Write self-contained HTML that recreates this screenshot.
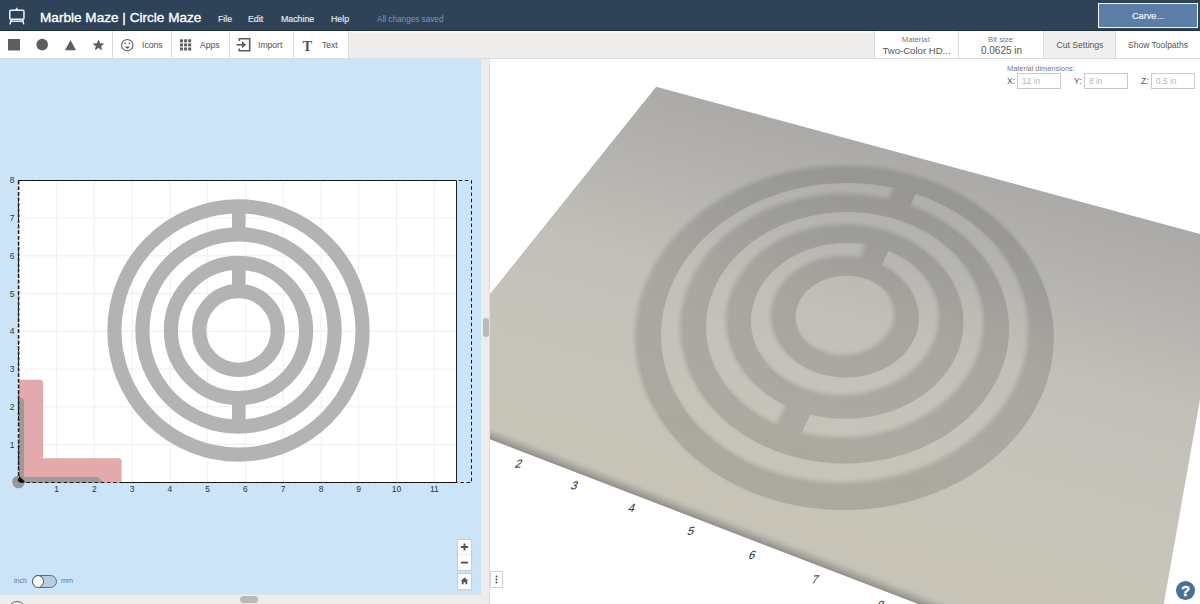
<!DOCTYPE html>
<html><head><meta charset="utf-8"><style>
*{box-sizing:border-box;margin:0;padding:0}
html,body{width:1200px;height:604px;overflow:hidden;background:#fff;font-family:"Liberation Sans",sans-serif}
.a{position:absolute}
#hdr{left:0;top:0;width:1200px;height:31px;background:#2e4358;border-bottom:1px solid #1e2e3d}
#hdr .t{color:#fff;font-size:13.6px;line-height:14px;top:10.5px;-webkit-text-stroke:0.35px #fff;left:40px;white-space:nowrap}
#hdr .m{color:#e8edf2;font-size:8.8px;line-height:9px;top:14.5px;-webkit-text-stroke:0.15px #e8edf2;white-space:nowrap}
#hdr .s{color:#8798ab;font-size:8.2px;line-height:9px;top:15px;left:377px;white-space:nowrap}
#carve{left:1098px;top:3px;width:100px;height:25px;background:#5a7ea6;border:1.6px solid #f4f6f8;color:#eef3f8;font-size:9.2px;text-align:center;line-height:10px;padding-top:7.2px;-webkit-text-stroke:0.2px #eef3f8}
#tb{left:0;top:31px;width:1200px;height:28px;background:#eeedeb;border-bottom:1px solid #d9dcde;box-shadow:inset 0 1.5px 0 #fafafa}
.tbw{top:0;height:27px;background:#fff;border-right:1px solid #dcdcdc}
.tl{color:#666;font-size:8.6px;line-height:9px;top:10px;white-space:nowrap;-webkit-text-stroke:0.1px #666}
.ic{fill:#5e5e5e}
#left{left:0;top:59px;width:481px;height:535px;background:#cce4f8;overflow:hidden}
#vs{left:481px;top:59px;width:9px;height:545px;background:#ececec;border-right:1px solid #dedede}
#hs{left:0;top:594px;width:481px;height:10px;background:#eaecee;border-top:1px solid #dfe3e6}
#view{left:490px;top:59px;width:710px;height:545px;background:#fff;overflow:hidden}
.zb{background:#fff;width:13px;height:15px;box-shadow:0 0 1px 1px rgba(0,0,0,0.08);color:#666;text-align:center}
.inp{height:16px;width:44px;border:1px solid #c9c9c9;background:#fff;color:#b5b5b5;font-size:8.3px;line-height:14px;padding-left:4px;top:14px}
.dl{font-size:8.5px;line-height:9px;color:#555;top:18px}
</style></head><body>
<div id="hdr" class="a">
 <svg class="a" style="left:7px;top:7px" width="20" height="20" viewBox="0 0 20 20" fill="none" stroke="#eef2f6" stroke-width="1.5">
  <rect x="2.75" y="3.35" width="14.2" height="8.9" rx="1"/>
  <path d="M8.7,2.7 L10.8,2.7 L9.75,0.8 Z" fill="#eef2f6" stroke-width="0.8"/>
  <line x1="3.6" y1="14.2" x2="16.2" y2="14.2"/>
  <line x1="4.2" y1="12.6" x2="3" y2="17.4"/><line x1="15.6" y1="12.6" x2="16.8" y2="17.4"/>
 </svg>
 <div class="a t">Marble Maze | Circle Maze</div>
 <div class="a m" style="left:218px">File</div>
 <div class="a m" style="left:248px">Edit</div>
 <div class="a m" style="left:281px">Machine</div>
 <div class="a m" style="left:331px">Help</div>
 <div class="a s">All changes saved</div>
 <div id="carve" class="a">Carve...</div>
</div>
<div id="tb" class="a">
 <div class="a tbw" style="left:0;width:113px"></div>
 <div class="a tbw" style="left:113px;width:59px"></div>
 <div class="a tbw" style="left:172px;width:58px"></div>
 <div class="a tbw" style="left:230px;width:64px"></div>
 <div class="a tbw" style="left:294px;width:55px"></div>
 <svg class="a" style="left:0;top:0" width="350" height="27">
  <rect class="ic" x="8" y="8" width="12" height="11.5"/>
  <circle class="ic" cx="42.2" cy="13.6" r="5.8"/>
  <polygon class="ic" points="65,19.2 76,19.2 70.5,9"/>
  <polygon class="ic" points="98.5,8.6 100.2,12.3 104.3,12.6 101.2,15.3 102.2,19.2 98.5,17 94.8,19.2 95.8,15.3 92.7,12.6 96.8,12.3"/>
  <g fill="none" stroke="#5e5e5e" stroke-width="1.1"><circle cx="127.3" cy="14.2" r="5.7"/></g>
  <circle class="ic" cx="125.2" cy="12.4" r="0.85"/><circle class="ic" cx="129.4" cy="12.4" r="0.85"/>
  <path class="ic" d="M125,15.6 Q127.3,15.2 129.6,15.6 Q129,17.7 127.3,17.7 Q125.6,17.7 125,15.6 Z"/>
  <g class="ic"><rect x="180" y="8.3" width="3" height="3"/><rect x="184.1" y="8.3" width="3" height="3"/><rect x="188.2" y="8.3" width="3" height="3"/>
  <rect x="180" y="12.4" width="3" height="3"/><rect x="184.1" y="12.4" width="3" height="3"/><rect x="188.2" y="12.4" width="3" height="3"/>
  <rect x="180" y="16.5" width="3" height="3"/><rect x="184.1" y="16.5" width="3" height="3"/><rect x="188.2" y="16.5" width="3" height="3"/></g>
  <g fill="none" stroke="#5e5e5e" stroke-width="1.6"><path d="M239.3,10 V7.8 H249.7 V19.8 H239.3 V17.6"/><path d="M236.5,13.8 H243"/></g><polygon class="ic" points="242,10.3 246.2,13.8 242,17.3"/>
  <text x="302.5" y="19.5" font-family="'Liberation Serif', serif" font-size="14.5" font-weight="bold" fill="#555">T</text>
 </svg>
 <div class="a tl" style="left:142px">Icons</div>
 <div class="a tl" style="left:200px">Apps</div>
 <div class="a tl" style="left:258px">Import</div>
 <div class="a tl" style="left:322px">Text</div>
 <div class="a tbw" style="left:874px;width:85px;border-left:1px solid #dcdcdc"></div>
 <div class="a tbw" style="left:959px;width:85px"></div>
 <div class="a tbw" style="left:1044px;width:72px;background:#efefef"></div>
 <div class="a tbw" style="left:1116px;width:84px;border-right:none"></div>
 <div class="a" style="left:874px;top:5px;width:85px;text-align:center;font-size:7.7px;line-height:8px;color:#777">Material:</div>
 <div class="a" style="left:874px;top:15px;width:85px;text-align:center;font-size:9.6px;line-height:10px;color:#555;white-space:nowrap">Two-Color HD...</div>
 <div class="a" style="left:959px;top:5px;width:85px;text-align:center;font-size:7.7px;line-height:8px;color:#777">Bit size:</div>
 <div class="a" style="left:959px;top:15px;width:85px;text-align:center;font-size:10px;line-height:10px;color:#555">0.0625 in</div>
 <div class="a" style="left:1044px;top:10px;width:72px;text-align:center;font-size:8.6px;line-height:9px;color:#555">Cut Settings</div>
 <div class="a" style="left:1116px;top:10px;width:84px;text-align:center;font-size:8.5px;line-height:9px;color:#555">Show Toolpaths</div>
</div>
<div id="left" class="a">
<svg width="481" height="535" viewBox="0 59 481 535" style="position:absolute;left:0;top:0">
<rect x="18.5" y="180.5" width="438" height="302" fill="#fff"/><path d="M18.5,180.5 H456.5 V482.5 H18.5" fill="none" stroke="#1e1e1e" stroke-width="1"/>
<g stroke="#eceff0" stroke-width="1"><line x1="56.6" y1="181" x2="56.6" y2="482" />
<line x1="94.3" y1="181" x2="94.3" y2="482" />
<line x1="132.1" y1="181" x2="132.1" y2="482" />
<line x1="169.9" y1="181" x2="169.9" y2="482" />
<line x1="207.7" y1="181" x2="207.7" y2="482" />
<line x1="245.4" y1="181" x2="245.4" y2="482" />
<line x1="283.2" y1="181" x2="283.2" y2="482" />
<line x1="321.0" y1="181" x2="321.0" y2="482" />
<line x1="358.7" y1="181" x2="358.7" y2="482" />
<line x1="396.5" y1="181" x2="396.5" y2="482" />
<line x1="434.3" y1="181" x2="434.3" y2="482" />
<line x1="19" y1="444.6" x2="456" y2="444.6" />
<line x1="19" y1="406.9" x2="456" y2="406.9" />
<line x1="19" y1="369.1" x2="456" y2="369.1" />
<line x1="19" y1="331.3" x2="456" y2="331.3" />
<line x1="19" y1="293.5" x2="456" y2="293.5" />
<line x1="19" y1="255.8" x2="456" y2="255.8" />
<line x1="19" y1="218.0" x2="456" y2="218.0" /></g>
<g fill="none" stroke="#b3b3b3" stroke-width="14.2"><circle cx="238.5" cy="330.5" r="124.1" /><circle cx="238.5" cy="330.5" r="96.1" /><circle cx="238.5" cy="330.5" r="67.6" /><circle cx="238.5" cy="330.5" r="39.3" /></g>
<g fill="#b3b3b3">
<rect x="232" y="212" width="13.5" height="17"/>
<rect x="232" y="268" width="13.5" height="18"/>
<rect x="232" y="403" width="13.5" height="18"/>
</g>
<path d="M19,379.7 L40,379.7 Q43,379.7 43,382.7 L43,458.2 L118.6,458.2 Q121.6,458.2 121.6,461.2 L121.6,483 L19,483 Z" fill="#e3a9ab"/>
<path d="M19,398 L22,398 Q24,399 24,401 L24,477 L98,477 L103,482 L103,483 L19,483 Z" fill="#9b9b9b"/>
<circle cx="18.5" cy="482" r="6.3" fill="#8f8f8f" opacity="0.9"/>
<path d="M19,476 L25,482 L19,482 Z" fill="#000"/>
<rect x="18.5" y="180.5" width="453" height="302" fill="none" stroke="#111" stroke-width="1" stroke-dasharray="3.5 2.7"/>
<line x1="18.6" y1="181" x2="18.6" y2="482" stroke="#222" stroke-width="1.6" stroke-dasharray="3.5 2"/>
<g font-family="'Liberation Sans', sans-serif" font-size="8.5" fill="#333"><text x="56.6" y="492" text-anchor="middle">1</text>
<text x="94.3" y="492" text-anchor="middle">2</text>
<text x="132.1" y="492" text-anchor="middle">3</text>
<text x="169.9" y="492" text-anchor="middle">4</text>
<text x="207.7" y="492" text-anchor="middle">5</text>
<text x="245.4" y="492" text-anchor="middle">6</text>
<text x="283.2" y="492" text-anchor="middle">7</text>
<text x="321.0" y="492" text-anchor="middle">8</text>
<text x="358.7" y="492" text-anchor="middle">9</text>
<text x="396.5" y="492" text-anchor="middle">10</text>
<text x="434.3" y="492" text-anchor="middle">11</text>
<text x="12" y="447.6" text-anchor="middle">1</text>
<text x="12" y="409.9" text-anchor="middle">2</text>
<text x="12" y="372.1" text-anchor="middle">3</text>
<text x="12" y="334.3" text-anchor="middle">4</text>
<text x="12" y="296.5" text-anchor="middle">5</text>
<text x="12" y="258.8" text-anchor="middle">6</text>
<text x="12" y="221.0" text-anchor="middle">7</text>
<text x="12" y="183.2" text-anchor="middle">8</text></g>
</svg>
 <div class="a" style="left:14px;top:518px;font-size:7.1px;line-height:8px;color:#66778a">inch</div>
 <div class="a" style="left:32px;top:516px;width:25px;height:13px;border-radius:7px;background:#b9cde0;border:1px solid #5d6e80"></div>
 <div class="a" style="left:32px;top:516px;width:12px;height:13px;border-radius:50%;background:#fff;border:1.2px solid #4f5f70"></div>
 <div class="a" style="left:61px;top:518px;font-size:7.2px;line-height:8px;color:#66778a">mm</div>
 <div class="a zb" style="left:458px;top:481px;"><svg width="13" height="15" viewBox="0 0 13 15"><path d="M2.9,7 H10.1 M6.5,3.4 V10.6" stroke="#555" stroke-width="1.9"/></svg></div>
 <div class="a zb" style="left:458px;top:496px;"><svg width="13" height="15" viewBox="0 0 13 15"><path d="M2.9,7.6 H10.1" stroke="#555" stroke-width="1.9"/></svg></div>
 <div class="a zb" style="left:458px;top:515px;">
  <svg width="13" height="15" viewBox="0 0 13 15"><path d="M6.5,3.4 L10.2,6.9 H9.2 V10.2 H7.4 V8.2 H5.6 V10.2 H3.8 V6.9 H2.8 Z" fill="#555"/></svg>
 </div>
</div>
<div id="vs" class="a"><div class="a" style="left:2px;top:259px;width:6px;height:19px;border-radius:3px;background:#b9b9b9"></div></div>
<div id="hs" class="a">
 <div class="a" style="left:240px;top:1px;width:18px;height:7px;border-radius:4px;background:#b9b9b9"></div>
 <div class="a" style="left:8px;top:6px;width:18px;height:18px;border-radius:50%;border:1.5px solid #5d6e80"></div>
</div>
<div id="view" class="a">
<svg width="710" height="545" viewBox="0 0 710 545" style="position:absolute;left:0;top:0">
<defs>
<linearGradient id="sg" gradientUnits="userSpaceOnUse" x1="166" y1="27.5" x2="61" y2="413.5">
<stop offset="0" stop-color="#abaaa8"/><stop offset="0.175" stop-color="#b3b2ae"/><stop offset="0.425" stop-color="#c2bfb8"/><stop offset="0.6" stop-color="#c5c2ba"/><stop offset="0.925" stop-color="#c7c4b7"/>
</linearGradient>
<linearGradient id="fg" gradientUnits="userSpaceOnUse" x1="-82.3" y1="337.5" x2="-86.5" y2="348.4">
<stop offset="0" stop-color="#c2c0b7"/><stop offset="0.25" stop-color="#b6b4ab"/><stop offset="0.7" stop-color="#9b9991"/><stop offset="1" stop-color="#87857e"/>
</linearGradient>
<filter id="bw" x="-20%" y="-20%" width="140%" height="140%"><feGaussianBlur stdDeviation="2"/></filter>
<filter id="bf" x="-20%" y="-20%" width="140%" height="140%"><feGaussianBlur stdDeviation="0.55"/></filter>
</defs>
<polygon points="-82.3,335.5 660.4,618.4 660.4,634.3 -82.3,348.6" fill="url(#fg)"/>
<polygon points="-82.3,337.5 660.4,620.4 738.0,182.6 166.2,27.8" fill="url(#sg)"/>
<g opacity="0.13"><g filter="url(#bw)" fill="#000" transform="translate(-3,-3.5)"><path fill-rule="evenodd" d="M557.7,320.3 L559.2,314.8 L560.6,309.4 L561.6,303.9 L562.5,298.5 L563.1,293.0 L563.6,287.6 L563.8,282.2 L563.8,276.8 L563.6,271.4 L563.2,266.0 L562.6,260.7 L561.8,255.5 L560.8,250.3 L559.6,245.1 L558.3,240.0 L556.7,234.9 L555.0,230.0 L553.1,225.0 L551.0,220.2 L548.7,215.4 L546.3,210.7 L543.7,206.1 L541.0,201.6 L538.1,197.2 L535.1,192.8 L531.9,188.5 L528.6,184.4 L525.2,180.3 L521.6,176.3 L517.9,172.5 L514.0,168.7 L510.1,165.1 L506.0,161.5 L501.9,158.1 L497.6,154.7 L493.2,151.5 L488.7,148.4 L484.2,145.4 L479.5,142.5 L474.8,139.7 L470.0,137.1 L465.1,134.6 L460.1,132.2 L455.0,129.9 L449.9,127.7 L444.7,125.6 L439.5,123.7 L434.2,121.9 L428.9,120.2 L423.5,118.7 L418.1,117.3 L412.6,115.9 L407.1,114.8 L401.6,113.7 L396.0,112.8 L390.4,112.0 L384.8,111.3 L379.1,110.7 L373.5,110.3 L367.8,110.0 L362.2,109.9 L356.5,109.8 L350.8,109.9 L345.1,110.1 L339.5,110.4 L333.8,110.9 L328.2,111.5 L322.5,112.2 L316.9,113.0 L311.4,114.0 L305.8,115.1 L300.3,116.3 L294.8,117.7 L289.3,119.2 L283.9,120.7 L278.6,122.5 L273.3,124.3 L268.0,126.3 L262.8,128.4 L257.7,130.6 L252.6,132.9 L247.6,135.4 L242.7,137.9 L237.8,140.6 L233.0,143.4 L228.3,146.4 L223.7,149.4 L219.2,152.6 L214.8,155.8 L210.5,159.2 L206.3,162.7 L202.2,166.3 L198.2,170.0 L194.3,173.8 L190.6,177.7 L187.0,181.7 L183.5,185.8 L180.2,190.0 L176.9,194.3 L173.9,198.7 L171.0,203.2 L168.2,207.8 L165.6,212.4 L163.1,217.2 L160.9,222.0 L158.7,226.9 L156.8,231.8 L155.0,236.9 L153.4,241.9 L152.0,247.1 L150.8,252.3 L149.8,257.5 L149.0,262.8 L148.4,268.2 L148.0,273.5 L147.7,278.9 L147.7,284.4 L148.0,289.8 L148.4,295.3 L149.0,300.7 L149.9,306.2 L151.0,311.7 L152.3,317.1 L153.8,322.6 L155.5,328.0 L157.5,333.4 L159.7,338.8 L162.1,344.1 L164.8,349.4 L167.7,354.6 L170.8,359.7 L174.1,364.8 L177.7,369.8 L181.5,374.7 L185.5,379.5 L189.7,384.3 L194.1,388.9 L198.7,393.4 L203.6,397.7 L208.6,402.0 L213.9,406.1 L219.3,410.1 L224.9,413.9 L230.7,417.6 L236.6,421.1 L242.8,424.4 L249.0,427.6 L255.5,430.6 L262.0,433.4 L268.7,436.0 L275.6,438.4 L282.5,440.6 L289.6,442.6 L296.7,444.4 L303.9,446.0 L311.2,447.4 L318.6,448.6 L326.0,449.5 L333.5,450.3 L341.0,450.8 L348.5,451.0 L356.0,451.1 L363.6,450.9 L371.1,450.5 L378.6,449.9 L386.0,449.1 L393.4,448.1 L400.8,446.8 L408.1,445.3 L415.3,443.6 L422.4,441.7 L429.4,439.6 L436.4,437.3 L443.2,434.8 L449.9,432.1 L456.4,429.2 L462.8,426.1 L469.1,422.9 L475.2,419.5 L481.1,415.9 L486.9,412.1 L492.5,408.3 L497.9,404.2 L503.1,400.1 L508.1,395.8 L512.9,391.3 L517.5,386.8 L521.9,382.1 L526.1,377.4 L530.1,372.5 L533.9,367.6 L537.4,362.5 L540.7,357.4 L543.8,352.3 L546.7,347.1 L549.4,341.8 L551.8,336.5 L554.0,331.1 L556.0,325.7ZM533.0,317.7 L531.1,322.5 L529.1,327.2 L526.9,331.8 L524.5,336.5 L521.8,341.0 L519.0,345.6 L516.0,350.0 L512.8,354.4 L509.4,358.7 L505.9,362.9 L502.1,367.1 L498.2,371.1 L494.1,375.1 L489.8,378.9 L485.3,382.7 L480.7,386.3 L475.9,389.8 L470.9,393.1 L465.8,396.4 L460.6,399.5 L455.2,402.4 L449.7,405.2 L444.0,407.9 L438.3,410.3 L432.4,412.7 L426.4,414.8 L420.3,416.8 L414.2,418.6 L407.9,420.3 L401.6,421.7 L395.2,423.0 L388.8,424.1 L382.3,425.0 L375.8,425.7 L369.2,426.2 L362.6,426.6 L356.1,426.7 L349.5,426.7 L342.9,426.4 L336.3,426.0 L329.8,425.4 L323.3,424.5 L316.9,423.5 L310.5,422.4 L304.1,421.0 L297.9,419.4 L291.7,417.7 L285.6,415.8 L279.6,413.7 L273.7,411.4 L268.0,409.0 L262.3,406.5 L256.8,403.7 L251.4,400.8 L246.1,397.8 L241.0,394.6 L236.0,391.3 L231.2,387.9 L226.6,384.3 L222.1,380.6 L217.8,376.8 L213.6,372.9 L209.7,368.9 L205.9,364.8 L202.3,360.6 L198.9,356.3 L195.7,352.0 L192.7,347.5 L189.9,343.0 L187.3,338.5 L184.8,333.8 L182.6,329.2 L180.6,324.5 L178.7,319.7 L177.1,315.0 L175.7,310.2 L174.4,305.4 L173.4,300.6 L172.5,295.7 L171.9,290.9 L171.4,286.1 L171.1,281.2 L171.0,276.4 L171.1,271.6 L171.4,266.9 L171.9,262.1 L172.5,257.4 L173.3,252.7 L174.3,248.1 L175.5,243.5 L176.8,239.0 L178.3,234.5 L179.9,230.1 L181.8,225.7 L183.7,221.4 L185.8,217.1 L188.1,212.9 L190.5,208.8 L193.0,204.8 L195.7,200.8 L198.5,197.0 L201.5,193.2 L204.5,189.5 L207.7,185.8 L211.0,182.3 L214.4,178.9 L218.0,175.5 L221.6,172.3 L225.3,169.1 L229.2,166.0 L233.1,163.1 L237.1,160.2 L241.2,157.4 L245.4,154.8 L249.7,152.2 L254.0,149.8 L258.4,147.4 L262.9,145.2 L267.5,143.1 L272.1,141.1 L276.7,139.2 L281.5,137.4 L286.2,135.7 L291.1,134.1 L295.9,132.7 L300.8,131.3 L305.8,130.1 L310.8,129.0 L315.8,128.0 L320.8,127.1 L325.8,126.3 L330.9,125.6 L336.0,125.1 L341.1,124.7 L346.2,124.4 L351.3,124.2 L356.5,124.1 L361.6,124.1 L366.7,124.3 L371.8,124.6 L376.9,125.0 L382.0,125.5 L387.1,126.1 L392.1,126.8 L397.1,127.7 L402.1,128.6 L407.1,129.7 L412.0,130.9 L416.9,132.2 L421.7,133.6 L426.6,135.2 L431.3,136.8 L436.0,138.6 L440.7,140.4 L445.2,142.4 L449.8,144.5 L454.2,146.7 L458.6,149.0 L462.9,151.4 L467.2,153.9 L471.3,156.5 L475.4,159.3 L479.4,162.1 L483.3,165.0 L487.1,168.0 L490.8,171.2 L494.4,174.4 L497.9,177.7 L501.3,181.1 L504.6,184.6 L507.7,188.2 L510.7,191.8 L513.7,195.6 L516.4,199.4 L519.1,203.4 L521.6,207.4 L524.0,211.4 L526.2,215.6 L528.3,219.8 L530.2,224.1 L532.0,228.4 L533.6,232.8 L535.1,237.3 L536.4,241.8 L537.6,246.3 L538.5,250.9 L539.3,255.6 L539.9,260.3 L540.4,265.0 L540.7,269.7 L540.7,274.5 L540.6,279.3 L540.3,284.1 L539.9,288.9 L539.2,293.7 L538.3,298.6 L537.3,303.4 L536.0,308.2 L534.6,313.0ZM513.0,306.1 L514.4,301.9 L515.5,297.7 L516.5,293.5 L517.4,289.3 L518.0,285.1 L518.5,280.8 L518.8,276.6 L519.0,272.4 L519.0,268.2 L518.9,264.0 L518.5,259.8 L518.1,255.7 L517.4,251.6 L516.6,247.5 L515.7,243.5 L514.6,239.5 L513.4,235.5 L512.0,231.6 L510.5,227.7 L508.8,223.9 L507.1,220.2 L505.1,216.5 L503.1,212.9 L500.9,209.3 L498.6,205.8 L496.2,202.4 L493.7,199.0 L491.0,195.7 L488.2,192.5 L485.4,189.4 L482.4,186.3 L479.3,183.3 L476.2,180.5 L472.9,177.6 L469.5,174.9 L466.1,172.3 L462.6,169.8 L459.0,167.3 L455.3,164.9 L451.5,162.7 L447.7,160.5 L443.8,158.4 L439.8,156.4 L435.8,154.6 L431.7,152.8 L427.6,151.1 L423.4,149.5 L419.1,148.0 L414.8,146.6 L410.5,145.3 L406.1,144.1 L401.7,143.1 L397.3,142.1 L392.8,141.2 L388.3,140.4 L383.8,139.8 L379.3,139.2 L374.7,138.8 L370.2,138.4 L365.6,138.2 L361.0,138.0 L356.4,138.0 L351.9,138.1 L347.3,138.2 L342.7,138.5 L338.1,138.9 L333.6,139.4 L329.0,140.0 L324.5,140.7 L320.0,141.5 L315.5,142.4 L311.1,143.4 L306.7,144.5 L302.3,145.7 L298.0,147.1 L293.7,148.5 L289.4,150.0 L285.2,151.6 L281.0,153.3 L276.9,155.2 L272.9,157.1 L268.9,159.1 L265.0,161.2 L261.1,163.4 L257.3,165.7 L253.6,168.1 L250.0,170.6 L246.4,173.2 L243.0,175.9 L239.6,178.6 L236.3,181.5 L233.1,184.4 L230.0,187.4 L227.0,190.5 L224.1,193.6 L221.3,196.9 L218.7,200.2 L216.1,203.6 L213.7,207.1 L211.3,210.6 L209.1,214.2 L207.1,217.9 L205.1,221.6 L203.3,225.4 L201.6,229.2 L200.1,233.1 L198.7,237.0 L197.4,241.0 L196.3,245.0 L195.4,249.1 L194.6,253.2 L193.9,257.3 L193.4,261.5 L193.1,265.7 L192.9,269.9 L192.9,274.1 L193.1,278.3 L193.4,282.5 L193.9,286.8 L194.6,291.0 L195.4,295.3 L196.4,299.5 L197.5,303.7 L198.9,307.9 L200.4,312.0 L202.1,316.2 L203.9,320.3 L206.0,324.3 L208.2,328.3 L210.5,332.3 L213.0,336.2 L215.7,340.1 L218.6,343.8 L221.6,347.5 L224.8,351.2 L228.2,354.7 L231.7,358.2 L235.3,361.6 L239.1,364.9 L243.1,368.0 L247.2,371.1 L251.4,374.1 L255.8,376.9 L260.3,379.6 L264.9,382.3 L269.6,384.7 L274.4,387.1 L279.4,389.3 L284.4,391.4 L289.6,393.3 L294.8,395.1 L300.1,396.7 L305.5,398.2 L310.9,399.5 L316.5,400.7 L322.0,401.7 L327.6,402.6 L333.3,403.3 L339.0,403.8 L344.7,404.2 L350.4,404.4 L356.1,404.4 L361.8,404.3 L367.5,404.0 L373.2,403.6 L378.9,403.0 L384.5,402.2 L390.1,401.3 L395.7,400.2 L401.2,398.9 L406.6,397.5 L412.0,396.0 L417.3,394.3 L422.5,392.4 L427.7,390.4 L432.7,388.3 L437.6,386.0 L442.5,383.6 L447.2,381.1 L451.8,378.4 L456.3,375.7 L460.6,372.8 L464.8,369.7 L468.9,366.6 L472.8,363.4 L476.6,360.1 L480.3,356.7 L483.8,353.2 L487.1,349.6 L490.3,345.9 L493.3,342.2 L496.2,338.4 L498.9,334.5 L501.4,330.6 L503.7,326.6 L505.9,322.6 L508.0,318.5 L509.8,314.4 L511.5,310.3ZM489.0,302.5 L487.5,306.0 L485.9,309.5 L484.1,313.0 L482.2,316.4 L480.1,319.7 L477.9,323.1 L475.5,326.3 L473.1,329.5 L470.4,332.7 L467.7,335.8 L464.8,338.8 L461.8,341.7 L458.6,344.6 L455.4,347.4 L452.0,350.1 L448.5,352.7 L444.9,355.2 L441.1,357.6 L437.3,360.0 L433.4,362.2 L429.4,364.3 L425.3,366.3 L421.1,368.2 L416.8,370.0 L412.4,371.7 L408.0,373.2 L403.5,374.6 L398.9,375.9 L394.3,377.1 L389.6,378.1 L384.9,379.0 L380.2,379.8 L375.4,380.4 L370.6,380.9 L365.8,381.3 L361.0,381.5 L356.1,381.6 L351.3,381.6 L346.4,381.4 L341.6,381.1 L336.8,380.7 L332.0,380.1 L327.3,379.4 L322.6,378.5 L317.9,377.6 L313.3,376.5 L308.7,375.2 L304.2,373.9 L299.8,372.4 L295.4,370.8 L291.1,369.0 L286.9,367.2 L282.8,365.2 L278.8,363.1 L274.8,361.0 L271.0,358.7 L267.3,356.3 L263.6,353.8 L260.1,351.2 L256.7,348.6 L253.5,345.8 L250.3,343.0 L247.3,340.1 L244.4,337.1 L241.6,334.0 L239.0,330.9 L236.5,327.7 L234.2,324.5 L232.0,321.1 L229.9,317.8 L227.9,314.4 L226.2,311.0 L224.5,307.5 L223.0,304.0 L221.7,300.4 L220.4,296.9 L219.4,293.3 L218.5,289.7 L217.7,286.1 L217.1,282.5 L216.6,278.8 L216.2,275.2 L216.0,271.6 L216.0,268.0 L216.0,264.4 L216.3,260.8 L216.6,257.2 L217.1,253.6 L217.7,250.1 L218.5,246.6 L219.4,243.1 L220.4,239.7 L221.5,236.3 L222.8,232.9 L224.2,229.6 L225.7,226.3 L227.3,223.1 L229.0,219.9 L230.9,216.8 L232.8,213.7 L234.9,210.7 L237.1,207.7 L239.3,204.8 L241.7,202.0 L244.2,199.2 L246.7,196.5 L249.4,193.9 L252.1,191.3 L254.9,188.9 L257.8,186.4 L260.8,184.1 L263.9,181.8 L267.0,179.7 L270.2,177.6 L273.5,175.5 L276.8,173.6 L280.2,171.7 L283.7,169.9 L287.2,168.3 L290.7,166.6 L294.3,165.1 L298.0,163.7 L301.7,162.4 L305.4,161.1 L309.2,159.9 L313.0,158.9 L316.9,157.9 L320.8,157.0 L324.7,156.2 L328.6,155.5 L332.5,154.8 L336.5,154.3 L340.4,153.9 L344.4,153.5 L348.4,153.3 L352.4,153.1 L356.4,153.1 L360.4,153.1 L364.4,153.2 L368.4,153.4 L372.4,153.8 L376.4,154.2 L380.3,154.7 L384.3,155.2 L388.2,155.9 L392.1,156.7 L395.9,157.6 L399.8,158.5 L403.6,159.6 L407.3,160.7 L411.1,161.9 L414.7,163.2 L418.4,164.6 L422.0,166.1 L425.5,167.7 L429.0,169.4 L432.5,171.1 L435.8,172.9 L439.2,174.8 L442.4,176.8 L445.6,178.9 L448.7,181.1 L451.7,183.3 L454.7,185.6 L457.6,188.0 L460.4,190.5 L463.1,193.0 L465.7,195.6 L468.3,198.3 L470.7,201.0 L473.1,203.8 L475.3,206.7 L477.5,209.6 L479.5,212.6 L481.5,215.6 L483.3,218.7 L485.0,221.9 L486.6,225.1 L488.1,228.4 L489.5,231.7 L490.7,235.0 L491.8,238.4 L492.8,241.8 L493.7,245.3 L494.4,248.7 L495.1,252.3 L495.5,255.8 L495.9,259.4 L496.1,262.9 L496.2,266.5 L496.1,270.1 L495.9,273.8 L495.5,277.4 L495.0,281.0 L494.4,284.6 L493.6,288.2 L492.7,291.8 L491.6,295.4 L490.4,299.0ZM468.2,291.9 L469.3,289.0 L470.2,286.0 L471.1,283.0 L471.8,280.0 L472.4,277.0 L472.8,274.0 L473.2,271.0 L473.4,267.9 L473.5,264.9 L473.5,261.9 L473.4,258.9 L473.2,255.9 L472.8,252.9 L472.4,250.0 L471.8,247.1 L471.1,244.1 L470.3,241.3 L469.5,238.4 L468.5,235.6 L467.4,232.8 L466.1,230.0 L464.8,227.3 L463.4,224.6 L461.9,222.0 L460.3,219.4 L458.7,216.9 L456.9,214.4 L455.0,212.0 L453.1,209.6 L451.0,207.2 L448.9,205.0 L446.7,202.7 L444.5,200.6 L442.1,198.5 L439.7,196.4 L437.2,194.4 L434.7,192.5 L432.0,190.7 L429.4,188.9 L426.6,187.2 L423.8,185.6 L421.0,184.0 L418.1,182.5 L415.1,181.1 L412.1,179.7 L409.1,178.4 L406.0,177.2 L402.9,176.1 L399.7,175.0 L396.5,174.1 L393.3,173.2 L390.0,172.3 L386.7,171.6 L383.4,170.9 L380.1,170.3 L376.7,169.8 L373.4,169.4 L370.0,169.1 L366.6,168.8 L363.2,168.6 L359.8,168.5 L356.4,168.5 L353.0,168.5 L349.6,168.7 L346.2,168.9 L342.8,169.2 L339.4,169.5 L336.1,170.0 L332.7,170.5 L329.4,171.1 L326.1,171.8 L322.8,172.6 L319.5,173.5 L316.3,174.4 L313.1,175.4 L309.9,176.5 L306.8,177.6 L303.7,178.9 L300.6,180.2 L297.6,181.6 L294.6,183.0 L291.7,184.5 L288.8,186.1 L286.0,187.8 L283.3,189.5 L280.6,191.3 L278.0,193.2 L275.4,195.1 L272.9,197.1 L270.5,199.2 L268.1,201.3 L265.8,203.5 L263.6,205.8 L261.5,208.1 L259.4,210.4 L257.5,212.8 L255.6,215.3 L253.8,217.8 L252.1,220.4 L250.5,223.0 L249.0,225.6 L247.6,228.3 L246.2,231.1 L245.0,233.8 L243.9,236.7 L242.9,239.5 L242.0,242.4 L241.2,245.3 L240.5,248.2 L239.9,251.1 L239.4,254.1 L239.1,257.1 L238.8,260.1 L238.7,263.1 L238.7,266.1 L238.8,269.1 L239.0,272.2 L239.4,275.2 L239.9,278.2 L240.4,281.2 L241.1,284.2 L242.0,287.2 L242.9,290.2 L244.0,293.2 L245.2,296.1 L246.5,299.0 L247.9,301.9 L249.4,304.7 L251.1,307.5 L252.9,310.3 L254.7,313.0 L256.7,315.7 L258.9,318.3 L261.1,320.9 L263.4,323.4 L265.8,325.8 L268.4,328.2 L271.0,330.6 L273.8,332.8 L276.6,335.0 L279.5,337.1 L282.6,339.1 L285.7,341.1 L288.9,343.0 L292.1,344.7 L295.5,346.4 L298.9,348.0 L302.4,349.5 L306.0,350.9 L309.6,352.2 L313.3,353.5 L317.0,354.6 L320.8,355.6 L324.6,356.5 L328.5,357.3 L332.3,358.0 L336.3,358.5 L340.2,359.0 L344.2,359.4 L348.2,359.6 L352.2,359.8 L356.1,359.8 L360.1,359.7 L364.1,359.5 L368.1,359.2 L372.1,358.8 L376.0,358.3 L379.9,357.7 L383.8,356.9 L387.7,356.1 L391.5,355.1 L395.3,354.1 L399.0,352.9 L402.7,351.7 L406.3,350.3 L409.8,348.9 L413.3,347.3 L416.8,345.7 L420.1,344.0 L423.4,342.2 L426.6,340.3 L429.7,338.3 L432.7,336.2 L435.6,334.1 L438.4,331.9 L441.2,329.6 L443.8,327.2 L446.4,324.8 L448.8,322.3 L451.1,319.8 L453.3,317.2 L455.5,314.6 L457.5,311.9 L459.3,309.1 L461.1,306.3 L462.8,303.5 L464.3,300.7 L465.7,297.8 L467.0,294.9ZM445.7,287.5 L444.6,289.8 L443.4,292.1 L442.1,294.4 L440.8,296.7 L439.3,298.9 L437.7,301.1 L436.1,303.2 L434.4,305.3 L432.5,307.4 L430.6,309.4 L428.7,311.4 L426.6,313.3 L424.4,315.2 L422.2,317.0 L419.9,318.7 L417.6,320.4 L415.1,322.1 L412.6,323.6 L410.0,325.1 L407.4,326.6 L404.7,327.9 L402.0,329.2 L399.2,330.4 L396.3,331.6 L393.4,332.6 L390.5,333.6 L387.5,334.5 L384.4,335.4 L381.4,336.1 L378.3,336.8 L375.2,337.4 L372.1,337.9 L368.9,338.3 L365.7,338.6 L362.6,338.8 L359.4,339.0 L356.2,339.0 L353.0,339.0 L349.8,338.9 L346.6,338.7 L343.4,338.4 L340.3,338.0 L337.2,337.6 L334.0,337.0 L331.0,336.4 L327.9,335.7 L324.9,334.9 L321.9,334.0 L318.9,333.1 L316.0,332.1 L313.2,330.9 L310.4,329.8 L307.6,328.5 L304.9,327.2 L302.3,325.8 L299.7,324.3 L297.2,322.7 L294.8,321.1 L292.4,319.5 L290.1,317.7 L287.9,315.9 L285.7,314.1 L283.6,312.2 L281.7,310.2 L279.8,308.2 L277.9,306.2 L276.2,304.1 L274.6,302.0 L273.0,299.8 L271.5,297.6 L270.2,295.3 L268.9,293.1 L267.7,290.8 L266.6,288.4 L265.6,286.1 L264.7,283.7 L263.9,281.3 L263.2,278.9 L262.6,276.5 L262.1,274.1 L261.7,271.6 L261.3,269.2 L261.1,266.7 L261.0,264.3 L260.9,261.8 L261.0,259.4 L261.1,257.0 L261.4,254.6 L261.7,252.1 L262.1,249.7 L262.7,247.4 L263.3,245.0 L264.0,242.7 L264.7,240.3 L265.6,238.0 L266.6,235.8 L267.6,233.5 L268.7,231.3 L269.9,229.1 L271.2,227.0 L272.6,224.9 L274.0,222.8 L275.5,220.8 L277.1,218.8 L278.7,216.9 L280.4,215.0 L282.2,213.1 L284.1,211.3 L286.0,209.6 L287.9,207.9 L290.0,206.2 L292.0,204.6 L294.2,203.0 L296.4,201.5 L298.6,200.1 L300.9,198.7 L303.2,197.4 L305.6,196.1 L308.1,194.9 L310.5,193.8 L313.0,192.7 L315.6,191.6 L318.1,190.7 L320.7,189.8 L323.4,188.9 L326.0,188.2 L328.7,187.5 L331.4,186.8 L334.1,186.2 L336.9,185.7 L339.6,185.3 L342.4,184.9 L345.2,184.6 L348.0,184.3 L350.8,184.2 L353.6,184.0 L356.4,184.0 L359.2,184.0 L362.0,184.1 L364.8,184.3 L367.6,184.5 L370.4,184.8 L373.1,185.1 L375.9,185.6 L378.6,186.1 L381.3,186.6 L384.0,187.2 L386.7,187.9 L389.4,188.7 L392.0,189.5 L394.6,190.4 L397.2,191.3 L399.7,192.3 L402.2,193.4 L404.6,194.5 L407.1,195.7 L409.4,196.9 L411.8,198.2 L414.0,199.6 L416.3,201.0 L418.5,202.5 L420.6,204.0 L422.7,205.6 L424.7,207.2 L426.6,208.9 L428.5,210.7 L430.4,212.5 L432.1,214.3 L433.8,216.2 L435.5,218.1 L437.0,220.1 L438.5,222.1 L440.0,224.1 L441.3,226.2 L442.6,228.3 L443.7,230.5 L444.9,232.7 L445.9,234.9 L446.8,237.2 L447.7,239.5 L448.5,241.8 L449.1,244.1 L449.7,246.4 L450.3,248.8 L450.7,251.2 L451.0,253.6 L451.2,256.0 L451.4,258.4 L451.4,260.9 L451.4,263.3 L451.2,265.8 L451.0,268.2 L450.7,270.7 L450.3,273.1 L449.7,275.5 L449.1,277.9 L448.4,280.4 L447.6,282.7 L446.7,285.1ZM425.0,278.3 L425.7,276.5 L426.4,274.6 L426.9,272.8 L427.4,271.0 L427.9,269.1 L428.2,267.3 L428.5,265.4 L428.7,263.6 L428.9,261.7 L428.9,259.8 L428.9,258.0 L428.9,256.1 L428.7,254.3 L428.5,252.4 L428.2,250.6 L427.9,248.8 L427.4,247.0 L426.9,245.2 L426.4,243.4 L425.8,241.7 L425.1,239.9 L424.3,238.2 L423.5,236.5 L422.6,234.9 L421.6,233.2 L420.6,231.6 L419.6,230.0 L418.5,228.5 L417.3,226.9 L416.0,225.4 L414.7,224.0 L413.4,222.5 L412.0,221.2 L410.6,219.8 L409.1,218.5 L407.5,217.2 L405.9,216.0 L404.3,214.8 L402.6,213.6 L400.9,212.5 L399.2,211.4 L397.4,210.4 L395.6,209.5 L393.7,208.5 L391.8,207.6 L389.9,206.8 L387.9,206.0 L385.9,205.3 L383.9,204.6 L381.9,204.0 L379.9,203.4 L377.8,202.8 L375.7,202.3 L373.6,201.9 L371.5,201.5 L369.3,201.2 L367.2,200.9 L365.0,200.7 L362.9,200.5 L360.7,200.4 L358.5,200.3 L356.4,200.3 L354.2,200.3 L352.0,200.4 L349.8,200.6 L347.7,200.8 L345.5,201.0 L343.4,201.3 L341.2,201.6 L339.1,202.1 L337.0,202.5 L334.9,203.0 L332.8,203.6 L330.8,204.2 L328.8,204.8 L326.7,205.5 L324.8,206.3 L322.8,207.1 L320.9,208.0 L319.0,208.9 L317.1,209.8 L315.3,210.8 L313.5,211.8 L311.7,212.9 L310.0,214.0 L308.3,215.2 L306.7,216.4 L305.1,217.7 L303.5,219.0 L302.0,220.3 L300.6,221.7 L299.2,223.1 L297.8,224.5 L296.5,226.0 L295.3,227.5 L294.1,229.0 L293.0,230.6 L291.9,232.2 L290.9,233.8 L289.9,235.5 L289.0,237.2 L288.2,238.9 L287.5,240.6 L286.8,242.3 L286.1,244.1 L285.6,245.9 L285.1,247.7 L284.6,249.5 L284.3,251.3 L284.0,253.2 L283.7,255.0 L283.6,256.9 L283.5,258.7 L283.5,260.6 L283.6,262.4 L283.7,264.3 L283.9,266.2 L284.2,268.0 L284.6,269.9 L285.0,271.7 L285.5,273.6 L286.1,275.4 L286.7,277.2 L287.4,279.0 L288.2,280.8 L289.1,282.5 L290.0,284.2 L291.0,286.0 L292.1,287.6 L293.2,289.3 L294.4,290.9 L295.7,292.5 L297.0,294.1 L298.4,295.6 L299.9,297.1 L301.4,298.6 L303.0,300.0 L304.6,301.4 L306.3,302.7 L308.1,304.0 L309.9,305.3 L311.7,306.5 L313.6,307.6 L315.6,308.7 L317.6,309.7 L319.6,310.7 L321.7,311.7 L323.8,312.6 L326.0,313.4 L328.2,314.1 L330.4,314.9 L332.6,315.5 L334.9,316.1 L337.2,316.6 L339.6,317.1 L341.9,317.5 L344.3,317.8 L346.6,318.1 L349.0,318.3 L351.4,318.5 L353.8,318.5 L356.2,318.6 L358.6,318.5 L361.0,318.4 L363.4,318.2 L365.8,318.0 L368.2,317.7 L370.5,317.3 L372.9,316.9 L375.2,316.4 L377.5,315.9 L379.8,315.2 L382.0,314.6 L384.2,313.8 L386.4,313.0 L388.6,312.2 L390.7,311.3 L392.8,310.3 L394.8,309.3 L396.8,308.2 L398.8,307.1 L400.7,306.0 L402.5,304.7 L404.3,303.5 L406.1,302.2 L407.8,300.8 L409.4,299.4 L411.0,298.0 L412.5,296.5 L414.0,295.0 L415.4,293.5 L416.7,291.9 L418.0,290.3 L419.2,288.6 L420.3,287.0 L421.4,285.3 L422.4,283.5 L423.3,281.8 L424.2,280.0ZM403.4,272.8 L402.7,274.0 L402.1,275.2 L401.4,276.4 L400.6,277.6 L399.8,278.7 L398.9,279.8 L398.1,280.9 L397.1,282.0 L396.1,283.1 L395.1,284.1 L394.0,285.1 L392.9,286.1 L391.8,287.1 L390.6,288.0 L389.4,288.9 L388.1,289.7 L386.9,290.6 L385.5,291.4 L384.2,292.1 L382.8,292.8 L381.4,293.5 L379.9,294.2 L378.5,294.8 L377.0,295.4 L375.5,295.9 L374.0,296.4 L372.4,296.8 L370.8,297.3 L369.3,297.6 L367.7,298.0 L366.1,298.3 L364.4,298.5 L362.8,298.7 L361.2,298.9 L359.5,299.0 L357.9,299.1 L356.2,299.1 L354.6,299.1 L352.9,299.0 L351.3,298.9 L349.7,298.8 L348.0,298.6 L346.4,298.4 L344.8,298.1 L343.2,297.8 L341.6,297.4 L340.1,297.0 L338.5,296.6 L337.0,296.1 L335.5,295.6 L334.0,295.0 L332.5,294.4 L331.1,293.8 L329.7,293.1 L328.3,292.4 L326.9,291.7 L325.6,290.9 L324.3,290.1 L323.1,289.2 L321.9,288.3 L320.7,287.4 L319.5,286.5 L318.4,285.5 L317.4,284.5 L316.3,283.5 L315.4,282.5 L314.4,281.4 L313.5,280.3 L312.7,279.2 L311.9,278.0 L311.1,276.9 L310.4,275.7 L309.7,274.5 L309.1,273.3 L308.6,272.1 L308.0,270.8 L307.6,269.6 L307.1,268.3 L306.8,267.1 L306.5,265.8 L306.2,264.5 L306.0,263.2 L305.8,261.9 L305.7,260.6 L305.6,259.3 L305.6,258.0 L305.6,256.8 L305.7,255.5 L305.8,254.2 L306.0,252.9 L306.2,251.6 L306.5,250.3 L306.8,249.1 L307.2,247.8 L307.6,246.6 L308.1,245.4 L308.6,244.2 L309.2,243.0 L309.8,241.8 L310.4,240.6 L311.1,239.5 L311.9,238.3 L312.6,237.2 L313.5,236.1 L314.3,235.1 L315.2,234.0 L316.1,233.0 L317.1,232.0 L318.1,231.0 L319.2,230.1 L320.2,229.2 L321.4,228.3 L322.5,227.4 L323.7,226.6 L324.9,225.8 L326.1,225.0 L327.4,224.3 L328.6,223.6 L330.0,222.9 L331.3,222.2 L332.6,221.6 L334.0,221.1 L335.4,220.5 L336.8,220.0 L338.3,219.5 L339.7,219.1 L341.2,218.7 L342.7,218.3 L344.2,218.0 L345.7,217.7 L347.2,217.5 L348.7,217.3 L350.2,217.1 L351.7,216.9 L353.3,216.8 L354.8,216.8 L356.3,216.7 L357.9,216.8 L359.4,216.8 L360.9,216.9 L362.5,217.0 L364.0,217.2 L365.5,217.4 L367.0,217.6 L368.5,217.9 L370.0,218.2 L371.5,218.6 L372.9,218.9 L374.4,219.4 L375.8,219.8 L377.2,220.3 L378.6,220.8 L380.0,221.4 L381.4,222.0 L382.7,222.6 L384.0,223.3 L385.3,224.0 L386.5,224.7 L387.8,225.5 L389.0,226.3 L390.1,227.1 L391.3,227.9 L392.4,228.8 L393.4,229.7 L394.5,230.7 L395.5,231.6 L396.5,232.6 L397.4,233.6 L398.3,234.7 L399.1,235.7 L399.9,236.8 L400.7,237.9 L401.4,239.0 L402.1,240.2 L402.8,241.3 L403.4,242.5 L403.9,243.7 L404.4,244.9 L404.9,246.1 L405.3,247.4 L405.7,248.6 L406.0,249.9 L406.3,251.1 L406.5,252.4 L406.7,253.7 L406.8,255.0 L406.9,256.2 L406.9,257.5 L406.9,258.8 L406.8,260.1 L406.7,261.4 L406.5,262.7 L406.3,264.0 L406.0,265.3 L405.7,266.6 L405.3,267.8 L404.9,269.1 L404.5,270.3 L403.9,271.6Z"/><path d="M409.8,125.9 L427.8,130.9 L418.2,151.0 L399.9,145.8ZM381.9,182.0 L400.7,187.6 L390.0,209.9 L370.9,204.2ZM287.3,372.3 L308.8,379.9 L322.1,352.0 L300.9,344.7Z"/></g><g filter="url(#bf)" fill="#000"><path fill-rule="evenodd" d="M557.7,320.3 L559.2,314.8 L560.6,309.4 L561.6,303.9 L562.5,298.5 L563.1,293.0 L563.6,287.6 L563.8,282.2 L563.8,276.8 L563.6,271.4 L563.2,266.0 L562.6,260.7 L561.8,255.5 L560.8,250.3 L559.6,245.1 L558.3,240.0 L556.7,234.9 L555.0,230.0 L553.1,225.0 L551.0,220.2 L548.7,215.4 L546.3,210.7 L543.7,206.1 L541.0,201.6 L538.1,197.2 L535.1,192.8 L531.9,188.5 L528.6,184.4 L525.2,180.3 L521.6,176.3 L517.9,172.5 L514.0,168.7 L510.1,165.1 L506.0,161.5 L501.9,158.1 L497.6,154.7 L493.2,151.5 L488.7,148.4 L484.2,145.4 L479.5,142.5 L474.8,139.7 L470.0,137.1 L465.1,134.6 L460.1,132.2 L455.0,129.9 L449.9,127.7 L444.7,125.6 L439.5,123.7 L434.2,121.9 L428.9,120.2 L423.5,118.7 L418.1,117.3 L412.6,115.9 L407.1,114.8 L401.6,113.7 L396.0,112.8 L390.4,112.0 L384.8,111.3 L379.1,110.7 L373.5,110.3 L367.8,110.0 L362.2,109.9 L356.5,109.8 L350.8,109.9 L345.1,110.1 L339.5,110.4 L333.8,110.9 L328.2,111.5 L322.5,112.2 L316.9,113.0 L311.4,114.0 L305.8,115.1 L300.3,116.3 L294.8,117.7 L289.3,119.2 L283.9,120.7 L278.6,122.5 L273.3,124.3 L268.0,126.3 L262.8,128.4 L257.7,130.6 L252.6,132.9 L247.6,135.4 L242.7,137.9 L237.8,140.6 L233.0,143.4 L228.3,146.4 L223.7,149.4 L219.2,152.6 L214.8,155.8 L210.5,159.2 L206.3,162.7 L202.2,166.3 L198.2,170.0 L194.3,173.8 L190.6,177.7 L187.0,181.7 L183.5,185.8 L180.2,190.0 L176.9,194.3 L173.9,198.7 L171.0,203.2 L168.2,207.8 L165.6,212.4 L163.1,217.2 L160.9,222.0 L158.7,226.9 L156.8,231.8 L155.0,236.9 L153.4,241.9 L152.0,247.1 L150.8,252.3 L149.8,257.5 L149.0,262.8 L148.4,268.2 L148.0,273.5 L147.7,278.9 L147.7,284.4 L148.0,289.8 L148.4,295.3 L149.0,300.7 L149.9,306.2 L151.0,311.7 L152.3,317.1 L153.8,322.6 L155.5,328.0 L157.5,333.4 L159.7,338.8 L162.1,344.1 L164.8,349.4 L167.7,354.6 L170.8,359.7 L174.1,364.8 L177.7,369.8 L181.5,374.7 L185.5,379.5 L189.7,384.3 L194.1,388.9 L198.7,393.4 L203.6,397.7 L208.6,402.0 L213.9,406.1 L219.3,410.1 L224.9,413.9 L230.7,417.6 L236.6,421.1 L242.8,424.4 L249.0,427.6 L255.5,430.6 L262.0,433.4 L268.7,436.0 L275.6,438.4 L282.5,440.6 L289.6,442.6 L296.7,444.4 L303.9,446.0 L311.2,447.4 L318.6,448.6 L326.0,449.5 L333.5,450.3 L341.0,450.8 L348.5,451.0 L356.0,451.1 L363.6,450.9 L371.1,450.5 L378.6,449.9 L386.0,449.1 L393.4,448.1 L400.8,446.8 L408.1,445.3 L415.3,443.6 L422.4,441.7 L429.4,439.6 L436.4,437.3 L443.2,434.8 L449.9,432.1 L456.4,429.2 L462.8,426.1 L469.1,422.9 L475.2,419.5 L481.1,415.9 L486.9,412.1 L492.5,408.3 L497.9,404.2 L503.1,400.1 L508.1,395.8 L512.9,391.3 L517.5,386.8 L521.9,382.1 L526.1,377.4 L530.1,372.5 L533.9,367.6 L537.4,362.5 L540.7,357.4 L543.8,352.3 L546.7,347.1 L549.4,341.8 L551.8,336.5 L554.0,331.1 L556.0,325.7ZM533.0,317.7 L531.1,322.5 L529.1,327.2 L526.9,331.8 L524.5,336.5 L521.8,341.0 L519.0,345.6 L516.0,350.0 L512.8,354.4 L509.4,358.7 L505.9,362.9 L502.1,367.1 L498.2,371.1 L494.1,375.1 L489.8,378.9 L485.3,382.7 L480.7,386.3 L475.9,389.8 L470.9,393.1 L465.8,396.4 L460.6,399.5 L455.2,402.4 L449.7,405.2 L444.0,407.9 L438.3,410.3 L432.4,412.7 L426.4,414.8 L420.3,416.8 L414.2,418.6 L407.9,420.3 L401.6,421.7 L395.2,423.0 L388.8,424.1 L382.3,425.0 L375.8,425.7 L369.2,426.2 L362.6,426.6 L356.1,426.7 L349.5,426.7 L342.9,426.4 L336.3,426.0 L329.8,425.4 L323.3,424.5 L316.9,423.5 L310.5,422.4 L304.1,421.0 L297.9,419.4 L291.7,417.7 L285.6,415.8 L279.6,413.7 L273.7,411.4 L268.0,409.0 L262.3,406.5 L256.8,403.7 L251.4,400.8 L246.1,397.8 L241.0,394.6 L236.0,391.3 L231.2,387.9 L226.6,384.3 L222.1,380.6 L217.8,376.8 L213.6,372.9 L209.7,368.9 L205.9,364.8 L202.3,360.6 L198.9,356.3 L195.7,352.0 L192.7,347.5 L189.9,343.0 L187.3,338.5 L184.8,333.8 L182.6,329.2 L180.6,324.5 L178.7,319.7 L177.1,315.0 L175.7,310.2 L174.4,305.4 L173.4,300.6 L172.5,295.7 L171.9,290.9 L171.4,286.1 L171.1,281.2 L171.0,276.4 L171.1,271.6 L171.4,266.9 L171.9,262.1 L172.5,257.4 L173.3,252.7 L174.3,248.1 L175.5,243.5 L176.8,239.0 L178.3,234.5 L179.9,230.1 L181.8,225.7 L183.7,221.4 L185.8,217.1 L188.1,212.9 L190.5,208.8 L193.0,204.8 L195.7,200.8 L198.5,197.0 L201.5,193.2 L204.5,189.5 L207.7,185.8 L211.0,182.3 L214.4,178.9 L218.0,175.5 L221.6,172.3 L225.3,169.1 L229.2,166.0 L233.1,163.1 L237.1,160.2 L241.2,157.4 L245.4,154.8 L249.7,152.2 L254.0,149.8 L258.4,147.4 L262.9,145.2 L267.5,143.1 L272.1,141.1 L276.7,139.2 L281.5,137.4 L286.2,135.7 L291.1,134.1 L295.9,132.7 L300.8,131.3 L305.8,130.1 L310.8,129.0 L315.8,128.0 L320.8,127.1 L325.8,126.3 L330.9,125.6 L336.0,125.1 L341.1,124.7 L346.2,124.4 L351.3,124.2 L356.5,124.1 L361.6,124.1 L366.7,124.3 L371.8,124.6 L376.9,125.0 L382.0,125.5 L387.1,126.1 L392.1,126.8 L397.1,127.7 L402.1,128.6 L407.1,129.7 L412.0,130.9 L416.9,132.2 L421.7,133.6 L426.6,135.2 L431.3,136.8 L436.0,138.6 L440.7,140.4 L445.2,142.4 L449.8,144.5 L454.2,146.7 L458.6,149.0 L462.9,151.4 L467.2,153.9 L471.3,156.5 L475.4,159.3 L479.4,162.1 L483.3,165.0 L487.1,168.0 L490.8,171.2 L494.4,174.4 L497.9,177.7 L501.3,181.1 L504.6,184.6 L507.7,188.2 L510.7,191.8 L513.7,195.6 L516.4,199.4 L519.1,203.4 L521.6,207.4 L524.0,211.4 L526.2,215.6 L528.3,219.8 L530.2,224.1 L532.0,228.4 L533.6,232.8 L535.1,237.3 L536.4,241.8 L537.6,246.3 L538.5,250.9 L539.3,255.6 L539.9,260.3 L540.4,265.0 L540.7,269.7 L540.7,274.5 L540.6,279.3 L540.3,284.1 L539.9,288.9 L539.2,293.7 L538.3,298.6 L537.3,303.4 L536.0,308.2 L534.6,313.0ZM513.0,306.1 L514.4,301.9 L515.5,297.7 L516.5,293.5 L517.4,289.3 L518.0,285.1 L518.5,280.8 L518.8,276.6 L519.0,272.4 L519.0,268.2 L518.9,264.0 L518.5,259.8 L518.1,255.7 L517.4,251.6 L516.6,247.5 L515.7,243.5 L514.6,239.5 L513.4,235.5 L512.0,231.6 L510.5,227.7 L508.8,223.9 L507.1,220.2 L505.1,216.5 L503.1,212.9 L500.9,209.3 L498.6,205.8 L496.2,202.4 L493.7,199.0 L491.0,195.7 L488.2,192.5 L485.4,189.4 L482.4,186.3 L479.3,183.3 L476.2,180.5 L472.9,177.6 L469.5,174.9 L466.1,172.3 L462.6,169.8 L459.0,167.3 L455.3,164.9 L451.5,162.7 L447.7,160.5 L443.8,158.4 L439.8,156.4 L435.8,154.6 L431.7,152.8 L427.6,151.1 L423.4,149.5 L419.1,148.0 L414.8,146.6 L410.5,145.3 L406.1,144.1 L401.7,143.1 L397.3,142.1 L392.8,141.2 L388.3,140.4 L383.8,139.8 L379.3,139.2 L374.7,138.8 L370.2,138.4 L365.6,138.2 L361.0,138.0 L356.4,138.0 L351.9,138.1 L347.3,138.2 L342.7,138.5 L338.1,138.9 L333.6,139.4 L329.0,140.0 L324.5,140.7 L320.0,141.5 L315.5,142.4 L311.1,143.4 L306.7,144.5 L302.3,145.7 L298.0,147.1 L293.7,148.5 L289.4,150.0 L285.2,151.6 L281.0,153.3 L276.9,155.2 L272.9,157.1 L268.9,159.1 L265.0,161.2 L261.1,163.4 L257.3,165.7 L253.6,168.1 L250.0,170.6 L246.4,173.2 L243.0,175.9 L239.6,178.6 L236.3,181.5 L233.1,184.4 L230.0,187.4 L227.0,190.5 L224.1,193.6 L221.3,196.9 L218.7,200.2 L216.1,203.6 L213.7,207.1 L211.3,210.6 L209.1,214.2 L207.1,217.9 L205.1,221.6 L203.3,225.4 L201.6,229.2 L200.1,233.1 L198.7,237.0 L197.4,241.0 L196.3,245.0 L195.4,249.1 L194.6,253.2 L193.9,257.3 L193.4,261.5 L193.1,265.7 L192.9,269.9 L192.9,274.1 L193.1,278.3 L193.4,282.5 L193.9,286.8 L194.6,291.0 L195.4,295.3 L196.4,299.5 L197.5,303.7 L198.9,307.9 L200.4,312.0 L202.1,316.2 L203.9,320.3 L206.0,324.3 L208.2,328.3 L210.5,332.3 L213.0,336.2 L215.7,340.1 L218.6,343.8 L221.6,347.5 L224.8,351.2 L228.2,354.7 L231.7,358.2 L235.3,361.6 L239.1,364.9 L243.1,368.0 L247.2,371.1 L251.4,374.1 L255.8,376.9 L260.3,379.6 L264.9,382.3 L269.6,384.7 L274.4,387.1 L279.4,389.3 L284.4,391.4 L289.6,393.3 L294.8,395.1 L300.1,396.7 L305.5,398.2 L310.9,399.5 L316.5,400.7 L322.0,401.7 L327.6,402.6 L333.3,403.3 L339.0,403.8 L344.7,404.2 L350.4,404.4 L356.1,404.4 L361.8,404.3 L367.5,404.0 L373.2,403.6 L378.9,403.0 L384.5,402.2 L390.1,401.3 L395.7,400.2 L401.2,398.9 L406.6,397.5 L412.0,396.0 L417.3,394.3 L422.5,392.4 L427.7,390.4 L432.7,388.3 L437.6,386.0 L442.5,383.6 L447.2,381.1 L451.8,378.4 L456.3,375.7 L460.6,372.8 L464.8,369.7 L468.9,366.6 L472.8,363.4 L476.6,360.1 L480.3,356.7 L483.8,353.2 L487.1,349.6 L490.3,345.9 L493.3,342.2 L496.2,338.4 L498.9,334.5 L501.4,330.6 L503.7,326.6 L505.9,322.6 L508.0,318.5 L509.8,314.4 L511.5,310.3ZM489.0,302.5 L487.5,306.0 L485.9,309.5 L484.1,313.0 L482.2,316.4 L480.1,319.7 L477.9,323.1 L475.5,326.3 L473.1,329.5 L470.4,332.7 L467.7,335.8 L464.8,338.8 L461.8,341.7 L458.6,344.6 L455.4,347.4 L452.0,350.1 L448.5,352.7 L444.9,355.2 L441.1,357.6 L437.3,360.0 L433.4,362.2 L429.4,364.3 L425.3,366.3 L421.1,368.2 L416.8,370.0 L412.4,371.7 L408.0,373.2 L403.5,374.6 L398.9,375.9 L394.3,377.1 L389.6,378.1 L384.9,379.0 L380.2,379.8 L375.4,380.4 L370.6,380.9 L365.8,381.3 L361.0,381.5 L356.1,381.6 L351.3,381.6 L346.4,381.4 L341.6,381.1 L336.8,380.7 L332.0,380.1 L327.3,379.4 L322.6,378.5 L317.9,377.6 L313.3,376.5 L308.7,375.2 L304.2,373.9 L299.8,372.4 L295.4,370.8 L291.1,369.0 L286.9,367.2 L282.8,365.2 L278.8,363.1 L274.8,361.0 L271.0,358.7 L267.3,356.3 L263.6,353.8 L260.1,351.2 L256.7,348.6 L253.5,345.8 L250.3,343.0 L247.3,340.1 L244.4,337.1 L241.6,334.0 L239.0,330.9 L236.5,327.7 L234.2,324.5 L232.0,321.1 L229.9,317.8 L227.9,314.4 L226.2,311.0 L224.5,307.5 L223.0,304.0 L221.7,300.4 L220.4,296.9 L219.4,293.3 L218.5,289.7 L217.7,286.1 L217.1,282.5 L216.6,278.8 L216.2,275.2 L216.0,271.6 L216.0,268.0 L216.0,264.4 L216.3,260.8 L216.6,257.2 L217.1,253.6 L217.7,250.1 L218.5,246.6 L219.4,243.1 L220.4,239.7 L221.5,236.3 L222.8,232.9 L224.2,229.6 L225.7,226.3 L227.3,223.1 L229.0,219.9 L230.9,216.8 L232.8,213.7 L234.9,210.7 L237.1,207.7 L239.3,204.8 L241.7,202.0 L244.2,199.2 L246.7,196.5 L249.4,193.9 L252.1,191.3 L254.9,188.9 L257.8,186.4 L260.8,184.1 L263.9,181.8 L267.0,179.7 L270.2,177.6 L273.5,175.5 L276.8,173.6 L280.2,171.7 L283.7,169.9 L287.2,168.3 L290.7,166.6 L294.3,165.1 L298.0,163.7 L301.7,162.4 L305.4,161.1 L309.2,159.9 L313.0,158.9 L316.9,157.9 L320.8,157.0 L324.7,156.2 L328.6,155.5 L332.5,154.8 L336.5,154.3 L340.4,153.9 L344.4,153.5 L348.4,153.3 L352.4,153.1 L356.4,153.1 L360.4,153.1 L364.4,153.2 L368.4,153.4 L372.4,153.8 L376.4,154.2 L380.3,154.7 L384.3,155.2 L388.2,155.9 L392.1,156.7 L395.9,157.6 L399.8,158.5 L403.6,159.6 L407.3,160.7 L411.1,161.9 L414.7,163.2 L418.4,164.6 L422.0,166.1 L425.5,167.7 L429.0,169.4 L432.5,171.1 L435.8,172.9 L439.2,174.8 L442.4,176.8 L445.6,178.9 L448.7,181.1 L451.7,183.3 L454.7,185.6 L457.6,188.0 L460.4,190.5 L463.1,193.0 L465.7,195.6 L468.3,198.3 L470.7,201.0 L473.1,203.8 L475.3,206.7 L477.5,209.6 L479.5,212.6 L481.5,215.6 L483.3,218.7 L485.0,221.9 L486.6,225.1 L488.1,228.4 L489.5,231.7 L490.7,235.0 L491.8,238.4 L492.8,241.8 L493.7,245.3 L494.4,248.7 L495.1,252.3 L495.5,255.8 L495.9,259.4 L496.1,262.9 L496.2,266.5 L496.1,270.1 L495.9,273.8 L495.5,277.4 L495.0,281.0 L494.4,284.6 L493.6,288.2 L492.7,291.8 L491.6,295.4 L490.4,299.0ZM468.2,291.9 L469.3,289.0 L470.2,286.0 L471.1,283.0 L471.8,280.0 L472.4,277.0 L472.8,274.0 L473.2,271.0 L473.4,267.9 L473.5,264.9 L473.5,261.9 L473.4,258.9 L473.2,255.9 L472.8,252.9 L472.4,250.0 L471.8,247.1 L471.1,244.1 L470.3,241.3 L469.5,238.4 L468.5,235.6 L467.4,232.8 L466.1,230.0 L464.8,227.3 L463.4,224.6 L461.9,222.0 L460.3,219.4 L458.7,216.9 L456.9,214.4 L455.0,212.0 L453.1,209.6 L451.0,207.2 L448.9,205.0 L446.7,202.7 L444.5,200.6 L442.1,198.5 L439.7,196.4 L437.2,194.4 L434.7,192.5 L432.0,190.7 L429.4,188.9 L426.6,187.2 L423.8,185.6 L421.0,184.0 L418.1,182.5 L415.1,181.1 L412.1,179.7 L409.1,178.4 L406.0,177.2 L402.9,176.1 L399.7,175.0 L396.5,174.1 L393.3,173.2 L390.0,172.3 L386.7,171.6 L383.4,170.9 L380.1,170.3 L376.7,169.8 L373.4,169.4 L370.0,169.1 L366.6,168.8 L363.2,168.6 L359.8,168.5 L356.4,168.5 L353.0,168.5 L349.6,168.7 L346.2,168.9 L342.8,169.2 L339.4,169.5 L336.1,170.0 L332.7,170.5 L329.4,171.1 L326.1,171.8 L322.8,172.6 L319.5,173.5 L316.3,174.4 L313.1,175.4 L309.9,176.5 L306.8,177.6 L303.7,178.9 L300.6,180.2 L297.6,181.6 L294.6,183.0 L291.7,184.5 L288.8,186.1 L286.0,187.8 L283.3,189.5 L280.6,191.3 L278.0,193.2 L275.4,195.1 L272.9,197.1 L270.5,199.2 L268.1,201.3 L265.8,203.5 L263.6,205.8 L261.5,208.1 L259.4,210.4 L257.5,212.8 L255.6,215.3 L253.8,217.8 L252.1,220.4 L250.5,223.0 L249.0,225.6 L247.6,228.3 L246.2,231.1 L245.0,233.8 L243.9,236.7 L242.9,239.5 L242.0,242.4 L241.2,245.3 L240.5,248.2 L239.9,251.1 L239.4,254.1 L239.1,257.1 L238.8,260.1 L238.7,263.1 L238.7,266.1 L238.8,269.1 L239.0,272.2 L239.4,275.2 L239.9,278.2 L240.4,281.2 L241.1,284.2 L242.0,287.2 L242.9,290.2 L244.0,293.2 L245.2,296.1 L246.5,299.0 L247.9,301.9 L249.4,304.7 L251.1,307.5 L252.9,310.3 L254.7,313.0 L256.7,315.7 L258.9,318.3 L261.1,320.9 L263.4,323.4 L265.8,325.8 L268.4,328.2 L271.0,330.6 L273.8,332.8 L276.6,335.0 L279.5,337.1 L282.6,339.1 L285.7,341.1 L288.9,343.0 L292.1,344.7 L295.5,346.4 L298.9,348.0 L302.4,349.5 L306.0,350.9 L309.6,352.2 L313.3,353.5 L317.0,354.6 L320.8,355.6 L324.6,356.5 L328.5,357.3 L332.3,358.0 L336.3,358.5 L340.2,359.0 L344.2,359.4 L348.2,359.6 L352.2,359.8 L356.1,359.8 L360.1,359.7 L364.1,359.5 L368.1,359.2 L372.1,358.8 L376.0,358.3 L379.9,357.7 L383.8,356.9 L387.7,356.1 L391.5,355.1 L395.3,354.1 L399.0,352.9 L402.7,351.7 L406.3,350.3 L409.8,348.9 L413.3,347.3 L416.8,345.7 L420.1,344.0 L423.4,342.2 L426.6,340.3 L429.7,338.3 L432.7,336.2 L435.6,334.1 L438.4,331.9 L441.2,329.6 L443.8,327.2 L446.4,324.8 L448.8,322.3 L451.1,319.8 L453.3,317.2 L455.5,314.6 L457.5,311.9 L459.3,309.1 L461.1,306.3 L462.8,303.5 L464.3,300.7 L465.7,297.8 L467.0,294.9ZM445.7,287.5 L444.6,289.8 L443.4,292.1 L442.1,294.4 L440.8,296.7 L439.3,298.9 L437.7,301.1 L436.1,303.2 L434.4,305.3 L432.5,307.4 L430.6,309.4 L428.7,311.4 L426.6,313.3 L424.4,315.2 L422.2,317.0 L419.9,318.7 L417.6,320.4 L415.1,322.1 L412.6,323.6 L410.0,325.1 L407.4,326.6 L404.7,327.9 L402.0,329.2 L399.2,330.4 L396.3,331.6 L393.4,332.6 L390.5,333.6 L387.5,334.5 L384.4,335.4 L381.4,336.1 L378.3,336.8 L375.2,337.4 L372.1,337.9 L368.9,338.3 L365.7,338.6 L362.6,338.8 L359.4,339.0 L356.2,339.0 L353.0,339.0 L349.8,338.9 L346.6,338.7 L343.4,338.4 L340.3,338.0 L337.2,337.6 L334.0,337.0 L331.0,336.4 L327.9,335.7 L324.9,334.9 L321.9,334.0 L318.9,333.1 L316.0,332.1 L313.2,330.9 L310.4,329.8 L307.6,328.5 L304.9,327.2 L302.3,325.8 L299.7,324.3 L297.2,322.7 L294.8,321.1 L292.4,319.5 L290.1,317.7 L287.9,315.9 L285.7,314.1 L283.6,312.2 L281.7,310.2 L279.8,308.2 L277.9,306.2 L276.2,304.1 L274.6,302.0 L273.0,299.8 L271.5,297.6 L270.2,295.3 L268.9,293.1 L267.7,290.8 L266.6,288.4 L265.6,286.1 L264.7,283.7 L263.9,281.3 L263.2,278.9 L262.6,276.5 L262.1,274.1 L261.7,271.6 L261.3,269.2 L261.1,266.7 L261.0,264.3 L260.9,261.8 L261.0,259.4 L261.1,257.0 L261.4,254.6 L261.7,252.1 L262.1,249.7 L262.7,247.4 L263.3,245.0 L264.0,242.7 L264.7,240.3 L265.6,238.0 L266.6,235.8 L267.6,233.5 L268.7,231.3 L269.9,229.1 L271.2,227.0 L272.6,224.9 L274.0,222.8 L275.5,220.8 L277.1,218.8 L278.7,216.9 L280.4,215.0 L282.2,213.1 L284.1,211.3 L286.0,209.6 L287.9,207.9 L290.0,206.2 L292.0,204.6 L294.2,203.0 L296.4,201.5 L298.6,200.1 L300.9,198.7 L303.2,197.4 L305.6,196.1 L308.1,194.9 L310.5,193.8 L313.0,192.7 L315.6,191.6 L318.1,190.7 L320.7,189.8 L323.4,188.9 L326.0,188.2 L328.7,187.5 L331.4,186.8 L334.1,186.2 L336.9,185.7 L339.6,185.3 L342.4,184.9 L345.2,184.6 L348.0,184.3 L350.8,184.2 L353.6,184.0 L356.4,184.0 L359.2,184.0 L362.0,184.1 L364.8,184.3 L367.6,184.5 L370.4,184.8 L373.1,185.1 L375.9,185.6 L378.6,186.1 L381.3,186.6 L384.0,187.2 L386.7,187.9 L389.4,188.7 L392.0,189.5 L394.6,190.4 L397.2,191.3 L399.7,192.3 L402.2,193.4 L404.6,194.5 L407.1,195.7 L409.4,196.9 L411.8,198.2 L414.0,199.6 L416.3,201.0 L418.5,202.5 L420.6,204.0 L422.7,205.6 L424.7,207.2 L426.6,208.9 L428.5,210.7 L430.4,212.5 L432.1,214.3 L433.8,216.2 L435.5,218.1 L437.0,220.1 L438.5,222.1 L440.0,224.1 L441.3,226.2 L442.6,228.3 L443.7,230.5 L444.9,232.7 L445.9,234.9 L446.8,237.2 L447.7,239.5 L448.5,241.8 L449.1,244.1 L449.7,246.4 L450.3,248.8 L450.7,251.2 L451.0,253.6 L451.2,256.0 L451.4,258.4 L451.4,260.9 L451.4,263.3 L451.2,265.8 L451.0,268.2 L450.7,270.7 L450.3,273.1 L449.7,275.5 L449.1,277.9 L448.4,280.4 L447.6,282.7 L446.7,285.1ZM425.0,278.3 L425.7,276.5 L426.4,274.6 L426.9,272.8 L427.4,271.0 L427.9,269.1 L428.2,267.3 L428.5,265.4 L428.7,263.6 L428.9,261.7 L428.9,259.8 L428.9,258.0 L428.9,256.1 L428.7,254.3 L428.5,252.4 L428.2,250.6 L427.9,248.8 L427.4,247.0 L426.9,245.2 L426.4,243.4 L425.8,241.7 L425.1,239.9 L424.3,238.2 L423.5,236.5 L422.6,234.9 L421.6,233.2 L420.6,231.6 L419.6,230.0 L418.5,228.5 L417.3,226.9 L416.0,225.4 L414.7,224.0 L413.4,222.5 L412.0,221.2 L410.6,219.8 L409.1,218.5 L407.5,217.2 L405.9,216.0 L404.3,214.8 L402.6,213.6 L400.9,212.5 L399.2,211.4 L397.4,210.4 L395.6,209.5 L393.7,208.5 L391.8,207.6 L389.9,206.8 L387.9,206.0 L385.9,205.3 L383.9,204.6 L381.9,204.0 L379.9,203.4 L377.8,202.8 L375.7,202.3 L373.6,201.9 L371.5,201.5 L369.3,201.2 L367.2,200.9 L365.0,200.7 L362.9,200.5 L360.7,200.4 L358.5,200.3 L356.4,200.3 L354.2,200.3 L352.0,200.4 L349.8,200.6 L347.7,200.8 L345.5,201.0 L343.4,201.3 L341.2,201.6 L339.1,202.1 L337.0,202.5 L334.9,203.0 L332.8,203.6 L330.8,204.2 L328.8,204.8 L326.7,205.5 L324.8,206.3 L322.8,207.1 L320.9,208.0 L319.0,208.9 L317.1,209.8 L315.3,210.8 L313.5,211.8 L311.7,212.9 L310.0,214.0 L308.3,215.2 L306.7,216.4 L305.1,217.7 L303.5,219.0 L302.0,220.3 L300.6,221.7 L299.2,223.1 L297.8,224.5 L296.5,226.0 L295.3,227.5 L294.1,229.0 L293.0,230.6 L291.9,232.2 L290.9,233.8 L289.9,235.5 L289.0,237.2 L288.2,238.9 L287.5,240.6 L286.8,242.3 L286.1,244.1 L285.6,245.9 L285.1,247.7 L284.6,249.5 L284.3,251.3 L284.0,253.2 L283.7,255.0 L283.6,256.9 L283.5,258.7 L283.5,260.6 L283.6,262.4 L283.7,264.3 L283.9,266.2 L284.2,268.0 L284.6,269.9 L285.0,271.7 L285.5,273.6 L286.1,275.4 L286.7,277.2 L287.4,279.0 L288.2,280.8 L289.1,282.5 L290.0,284.2 L291.0,286.0 L292.1,287.6 L293.2,289.3 L294.4,290.9 L295.7,292.5 L297.0,294.1 L298.4,295.6 L299.9,297.1 L301.4,298.6 L303.0,300.0 L304.6,301.4 L306.3,302.7 L308.1,304.0 L309.9,305.3 L311.7,306.5 L313.6,307.6 L315.6,308.7 L317.6,309.7 L319.6,310.7 L321.7,311.7 L323.8,312.6 L326.0,313.4 L328.2,314.1 L330.4,314.9 L332.6,315.5 L334.9,316.1 L337.2,316.6 L339.6,317.1 L341.9,317.5 L344.3,317.8 L346.6,318.1 L349.0,318.3 L351.4,318.5 L353.8,318.5 L356.2,318.6 L358.6,318.5 L361.0,318.4 L363.4,318.2 L365.8,318.0 L368.2,317.7 L370.5,317.3 L372.9,316.9 L375.2,316.4 L377.5,315.9 L379.8,315.2 L382.0,314.6 L384.2,313.8 L386.4,313.0 L388.6,312.2 L390.7,311.3 L392.8,310.3 L394.8,309.3 L396.8,308.2 L398.8,307.1 L400.7,306.0 L402.5,304.7 L404.3,303.5 L406.1,302.2 L407.8,300.8 L409.4,299.4 L411.0,298.0 L412.5,296.5 L414.0,295.0 L415.4,293.5 L416.7,291.9 L418.0,290.3 L419.2,288.6 L420.3,287.0 L421.4,285.3 L422.4,283.5 L423.3,281.8 L424.2,280.0ZM403.4,272.8 L402.7,274.0 L402.1,275.2 L401.4,276.4 L400.6,277.6 L399.8,278.7 L398.9,279.8 L398.1,280.9 L397.1,282.0 L396.1,283.1 L395.1,284.1 L394.0,285.1 L392.9,286.1 L391.8,287.1 L390.6,288.0 L389.4,288.9 L388.1,289.7 L386.9,290.6 L385.5,291.4 L384.2,292.1 L382.8,292.8 L381.4,293.5 L379.9,294.2 L378.5,294.8 L377.0,295.4 L375.5,295.9 L374.0,296.4 L372.4,296.8 L370.8,297.3 L369.3,297.6 L367.7,298.0 L366.1,298.3 L364.4,298.5 L362.8,298.7 L361.2,298.9 L359.5,299.0 L357.9,299.1 L356.2,299.1 L354.6,299.1 L352.9,299.0 L351.3,298.9 L349.7,298.8 L348.0,298.6 L346.4,298.4 L344.8,298.1 L343.2,297.8 L341.6,297.4 L340.1,297.0 L338.5,296.6 L337.0,296.1 L335.5,295.6 L334.0,295.0 L332.5,294.4 L331.1,293.8 L329.7,293.1 L328.3,292.4 L326.9,291.7 L325.6,290.9 L324.3,290.1 L323.1,289.2 L321.9,288.3 L320.7,287.4 L319.5,286.5 L318.4,285.5 L317.4,284.5 L316.3,283.5 L315.4,282.5 L314.4,281.4 L313.5,280.3 L312.7,279.2 L311.9,278.0 L311.1,276.9 L310.4,275.7 L309.7,274.5 L309.1,273.3 L308.6,272.1 L308.0,270.8 L307.6,269.6 L307.1,268.3 L306.8,267.1 L306.5,265.8 L306.2,264.5 L306.0,263.2 L305.8,261.9 L305.7,260.6 L305.6,259.3 L305.6,258.0 L305.6,256.8 L305.7,255.5 L305.8,254.2 L306.0,252.9 L306.2,251.6 L306.5,250.3 L306.8,249.1 L307.2,247.8 L307.6,246.6 L308.1,245.4 L308.6,244.2 L309.2,243.0 L309.8,241.8 L310.4,240.6 L311.1,239.5 L311.9,238.3 L312.6,237.2 L313.5,236.1 L314.3,235.1 L315.2,234.0 L316.1,233.0 L317.1,232.0 L318.1,231.0 L319.2,230.1 L320.2,229.2 L321.4,228.3 L322.5,227.4 L323.7,226.6 L324.9,225.8 L326.1,225.0 L327.4,224.3 L328.6,223.6 L330.0,222.9 L331.3,222.2 L332.6,221.6 L334.0,221.1 L335.4,220.5 L336.8,220.0 L338.3,219.5 L339.7,219.1 L341.2,218.7 L342.7,218.3 L344.2,218.0 L345.7,217.7 L347.2,217.5 L348.7,217.3 L350.2,217.1 L351.7,216.9 L353.3,216.8 L354.8,216.8 L356.3,216.7 L357.9,216.8 L359.4,216.8 L360.9,216.9 L362.5,217.0 L364.0,217.2 L365.5,217.4 L367.0,217.6 L368.5,217.9 L370.0,218.2 L371.5,218.6 L372.9,218.9 L374.4,219.4 L375.8,219.8 L377.2,220.3 L378.6,220.8 L380.0,221.4 L381.4,222.0 L382.7,222.6 L384.0,223.3 L385.3,224.0 L386.5,224.7 L387.8,225.5 L389.0,226.3 L390.1,227.1 L391.3,227.9 L392.4,228.8 L393.4,229.7 L394.5,230.7 L395.5,231.6 L396.5,232.6 L397.4,233.6 L398.3,234.7 L399.1,235.7 L399.9,236.8 L400.7,237.9 L401.4,239.0 L402.1,240.2 L402.8,241.3 L403.4,242.5 L403.9,243.7 L404.4,244.9 L404.9,246.1 L405.3,247.4 L405.7,248.6 L406.0,249.9 L406.3,251.1 L406.5,252.4 L406.7,253.7 L406.8,255.0 L406.9,256.2 L406.9,257.5 L406.9,258.8 L406.8,260.1 L406.7,261.4 L406.5,262.7 L406.3,264.0 L406.0,265.3 L405.7,266.6 L405.3,267.8 L404.9,269.1 L404.5,270.3 L403.9,271.6Z"/><path d="M409.8,125.9 L427.8,130.9 L418.2,151.0 L399.9,145.8ZM381.9,182.0 L400.7,187.6 L390.0,209.9 L370.9,204.2ZM287.3,372.3 L308.8,379.9 L322.1,352.0 L300.9,344.7Z"/></g></g>
<g font-family="'Liberation Sans', sans-serif" font-size="11.5" fill="#2a2a2a"><text transform="matrix(1.000,-0.060,-0.360,1.000,-24.9,383.0)" x="-3.3" y="4.3">1</text><text transform="matrix(1.000,-0.060,-0.360,1.000,29.1,404.2)" x="-3.3" y="4.3">2</text><text transform="matrix(1.000,-0.060,-0.360,1.000,84.8,426.0)" x="-3.3" y="4.3">3</text><text transform="matrix(1.000,-0.060,-0.360,1.000,142.2,448.5)" x="-3.3" y="4.3">4</text><text transform="matrix(1.000,-0.060,-0.360,1.000,201.4,471.6)" x="-3.3" y="4.3">5</text><text transform="matrix(1.000,-0.060,-0.360,1.000,262.5,495.5)" x="-3.3" y="4.3">6</text><text transform="matrix(1.000,-0.060,-0.360,1.000,325.6,520.1)" x="-3.3" y="4.3">7</text><text transform="matrix(1.000,-0.060,-0.360,1.000,390.9,545.6)" x="-3.3" y="4.3">8</text><text transform="matrix(1.000,-0.060,-0.360,1.000,458.3,571.8)" x="-3.3" y="4.3">9</text><text transform="matrix(1.000,-0.060,-0.360,1.000,528.0,599.0)" x="-3.3" y="4.3">10</text><text transform="matrix(1.000,-0.060,-0.360,1.000,600.3,627.1)" x="-3.3" y="4.3">11</text><text transform="matrix(1.000,-0.060,-0.360,1.000,675.0,656.2)" x="-3.3" y="4.3">12</text></g>
</svg>
 <div class="a" style="left:0px;top:512px;width:13px;height:17px;background:#fff;border:1px solid #d3d3d3">
  <svg width="11" height="15" viewBox="0 0 11 15"><circle cx="5.5" cy="4.5" r="1" fill="#555"/><circle cx="5.5" cy="7.5" r="1" fill="#555"/><circle cx="5.5" cy="10.5" r="1" fill="#555"/></svg>
 </div>
 <div class="a" style="left:517px;top:6px;font-size:7.4px;line-height:8px;color:#777;white-space:nowrap">Material dimensions:</div>
 <div class="a dl" style="left:517px">X:</div><div class="a inp" style="left:527px">12 in</div>
 <div class="a dl" style="left:584px">Y:</div><div class="a inp" style="left:594px">8 in</div>
 <div class="a dl" style="left:651px">Z:</div><div class="a inp" style="left:661px">0.5 in</div>
 <div class="a" style="left:686px;top:521.5px;width:19px;height:19px;border-radius:50%;background:#4a6f99;color:#fff;font-weight:bold;font-size:15px;line-height:19px;text-align:center;-webkit-text-stroke:0.4px #fff">?</div>
</div>
</body></html>
